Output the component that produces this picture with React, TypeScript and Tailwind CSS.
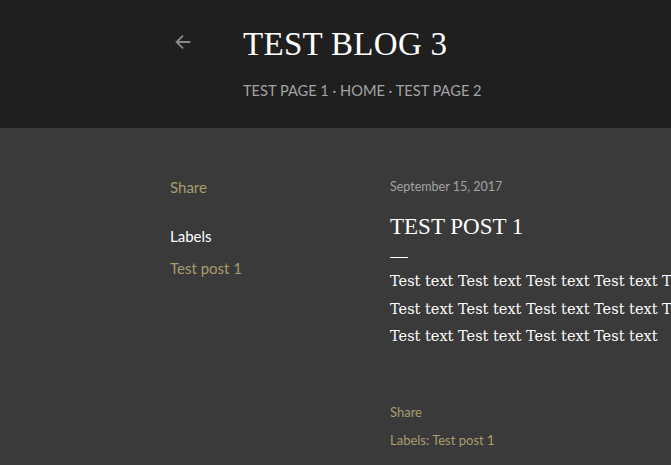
import React from 'react';

const sans = { fontFamily: 'Lato, "Open Sans", sans-serif' };

const App = () => {
  const lines = [
    'Test text Test text Test text Test text Test text Test text',
    'Test text Test text Test text Test text Test text Test text',
    'Test text Test text Test text Test text',
  ];

  return (
    <div className="w-[671px] h-[465px] overflow-hidden bg-[#3a3a3a]">
      {/* Header */}
      <div className="h-[128px] bg-[#1f1f1f] flex pl-[172px] pt-[24px]">
        <div className="w-[71px] pt-[7px]">
          <svg width="22" height="22" viewBox="0 0 24 24" fill="none" stroke="#8a8a8a" strokeWidth="2">
            <path d="M20 12H5M12 5l-7 7 7 7" />
          </svg>
        </div>
        <div>
          <h1 className="text-[33px] leading-[40px] text-white font-['Liberation_Serif',serif] tracking-[0.3px]">
            TEST BLOG 3
          </h1>
          <div className="mt-[16px] text-[14.6px] text-[#a3a3a3] whitespace-nowrap" style={sans}>
            TEST PAGE 1 · HOME · TEST PAGE 2
          </div>
        </div>
      </div>

      {/* Content */}
      <div className="flex pl-[170px] pt-[49px]">
        <div className="w-[220px] shrink-0" style={sans}>
          <div className="text-[15px] text-[#a89c6e] leading-[20px]">Share</div>
          <div className="mt-[29px] text-[15px] text-white leading-[20px]">Labels</div>
          <div className="mt-[12px] text-[15px] text-[#a89c6e] leading-[20px]">Test post 1</div>
        </div>
        <div className="shrink-0">
          <div className="mt-[2px] text-[12.5px] text-[#a3a3a3] leading-[16px]" style={sans}>
            September 15, 2017
          </div>
          <h2 className="mt-[18px] text-[23px] leading-[28px] text-white font-['Liberation_Serif',serif]">
            TEST POST 1
          </h2>
          <div className="mt-[16px] w-[18px] h-px bg-white" />
          <div className="mt-[10px] font-['DejaVu_Serif',serif] text-[14.5px] leading-[27.5px] text-white">
            {lines.map((l, i) => (
              <div key={i} className="whitespace-nowrap">{l}</div>
            ))}
          </div>
          <div className="mt-[52px] text-[13px] text-[#a89c6e] leading-[18px]" style={sans}>Share</div>
          <div className="mt-[10px] text-[13px] text-[#a89c6e] leading-[18px]" style={sans}>Labels: Test post 1</div>
        </div>
      </div>
    </div>
  );
};

export default App;
